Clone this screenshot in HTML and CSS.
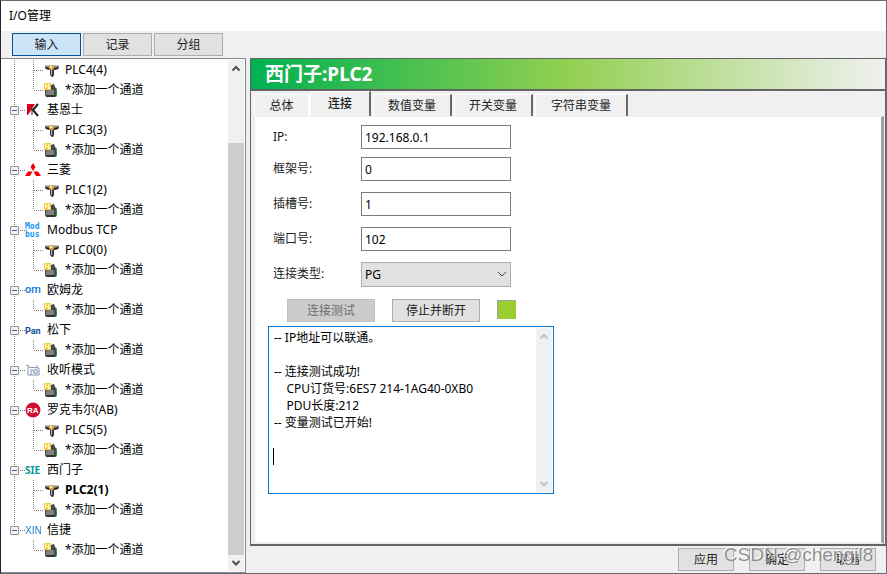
FILE: index.html
```
<!DOCTYPE html>
<html lang="zh-CN">
<head>
  <meta charset="UTF-8" />
  <title>I/O管理</title>
  <link rel="stylesheet" href="styles.css">
</head>
<body>
  <svg class="defs" width="0" height="0" aria-hidden="true">
    <symbol id="plc" viewBox="0 0 16 16">
      <path d="M1 3h14v3l-2 1.500H3L1 6z" fill="#8a8a8a"/>
      <path d="M1 3h14v1H1z" fill="#c4c4c4"/>
      <path d="M1 5l5 1v2L2 7zM10 6l5-1-1 2-4 1z" fill="#222"/>
      <path d="M6 7h4v6l-1 2H8l-2-2z" fill="#3a3a3a"/>
      <path d="M7 8h1v5H7z" fill="#b5b5b5"/>
      <rect x="5" y="3" width="5" height="5" rx="2" fill="#d9a441"/>
      <rect x="6" y="4" width="2" height="2" fill="#fff2b8"/>
    </symbol>
    <symbol id="add" viewBox="0 0 16 16">
      <path d="M7 3l3-1 1 3 2 2v7l-2 1H2l-1-2V8h6z" fill="#4a4a4a"/>
      <path d="M2 9l2-1h6v5H2z" fill="#808080"/>
      <path d="M2 13h9v2H3z" fill="#333"/>
      <path d="M12 7h1v3h-1zM12 11h1v3h-1z" fill="#1fae3a"/>
      <rect x="0" y="1" width="7" height="7" fill="#f3cf45"/>
      <path d="M1 2h1v2h2V2h2v1H5v2h1v2H4V5H2v1H1z" fill="#fff8c9"/>
    </symbol>
    <symbol id="up" viewBox="0 0 16 16"><path d="M4.500 10.500L8 7l3.500 3.500" fill="none" stroke="currentColor" stroke-width="2"/></symbol>
    <symbol id="down" viewBox="0 0 16 16"><path d="M4.500 6L8 9.500 11.500 6" fill="none" stroke="currentColor" stroke-width="2"/></symbol>
  </svg>

  <div class="window">
    <header class="titlebar">I/O管理</header>

    <div class="main">
      <aside class="side">
        <nav class="modes">
          <button class="btn mode selected">输入</button>
          <button class="btn mode">记录</button>
          <button class="btn mode">分组</button>
        </nav>
        <div class="tree-box">
          <ul class="tree">
            <li>
              <ul>
                <li><svg><use href="#plc"/></svg>PLC4(4)</li>
                <li><svg><use href="#add"/></svg>*添加一个通道</li>
              </ul>
            </li>
            <li>
              <div class="node"><button class="fold" aria-label="折叠"></button>
                <svg viewBox="0 0 16 16"><path d="M2 2h8L3 13H2z" fill="#d6001c"/><path d="M13 2L8 8l5 6" fill="none" stroke="#222" stroke-width="2"/><path d="M7 6v7" stroke="#222"/></svg>基恩士</div>
              <ul>
                <li><svg><use href="#plc"/></svg>PLC3(3)</li>
                <li><svg><use href="#add"/></svg>*添加一个通道</li>
              </ul>
            </li>
            <li>
              <div class="node"><button class="fold" aria-label="折叠"></button>
                <svg viewBox="0 0 16 16"><path d="M8 1l2.500 4L8 9 5.500 5zM7.500 9.500L5 14H0l3-4.500zM8.500 9.500H13l3 4.500h-5z" fill="#f00000"/></svg>三菱</div>
              <ul>
                <li><svg><use href="#plc"/></svg>PLC1(2)</li>
                <li><svg><use href="#add"/></svg>*添加一个通道</li>
              </ul>
            </li>
            <li>
              <div class="node"><button class="fold" aria-label="折叠"></button>
                <svg viewBox="0 0 16 16"><g class="logo-mod"><text x="0" y="7">Mod</text><text x="0" y="15">bus</text></g></svg>Modbus TCP</div>
              <ul>
                <li><svg><use href="#plc"/></svg>PLC0(0)</li>
                <li><svg><use href="#add"/></svg>*添加一个通道</li>
              </ul>
            </li>
            <li>
              <div class="node"><button class="fold" aria-label="折叠"></button>
                <svg viewBox="0 0 16 16"><text class="logo-om" x="0" y="11">om</text></svg>欧姆龙</div>
              <ul>
                <li><svg><use href="#add"/></svg>*添加一个通道</li>
              </ul>
            </li>
            <li>
              <div class="node"><button class="fold" aria-label="折叠"></button>
                <svg viewBox="0 0 16 16"><text class="logo-pan" x="0" y="12">Pan</text></svg>松下</div>
              <ul>
                <li><svg><use href="#add"/></svg>*添加一个通道</li>
              </ul>
            </li>
            <li>
              <div class="node"><button class="fold" aria-label="折叠"></button>
                <svg viewBox="0 0 16 16" fill="none" stroke="#8291b5"><path d="M1 3l3 1M3 5l11 1v7H3zM12 6V3M5 8h3M5 10h2M5 12h2"/><circle cx="10.500" cy="9.500" r="2" fill="#dce4f5"/></svg>收听模式</div>
              <ul>
                <li><svg><use href="#add"/></svg>*添加一个通道</li>
              </ul>
            </li>
            <li>
              <div class="node"><button class="fold" aria-label="折叠"></button>
                <svg viewBox="0 0 16 16"><circle cx="8" cy="8" r="7.500" fill="#cf1035"/><text class="logo-ra" x="2" y="11">RA</text></svg>罗克韦尔(AB)</div>
              <ul>
                <li><svg><use href="#plc"/></svg>PLC5(5)</li>
                <li><svg><use href="#add"/></svg>*添加一个通道</li>
              </ul>
            </li>
            <li>
              <div class="node"><button class="fold" aria-label="折叠"></button>
                <svg viewBox="0 0 16 16"><text class="logo-sie" x="0" y="12">SIE</text></svg>西门子</div>
              <ul>
                <li class="current"><svg><use href="#plc"/></svg>PLC2(1)</li>
                <li><svg><use href="#add"/></svg>*添加一个通道</li>
              </ul>
            </li>
            <li>
              <div class="node"><button class="fold" aria-label="折叠"></button>
                <svg viewBox="0 0 16 16"><text class="logo-xin" x="0" y="12">XIN</text></svg>信捷</div>
              <ul>
                <li><svg><use href="#add"/></svg>*添加一个通道</li>
              </ul>
            </li>
          </ul>
          <div class="scrollbar">
            <svg><use href="#up"/></svg>
            <div class="track"><div class="thumb"></div></div>
            <svg><use href="#down"/></svg>
          </div>
        </div>
      </aside>

      <section class="detail">
        <div class="panel">
          <h1>西门子:PLC2</h1>
          <div class="tabs" role="tablist">
            <button class="tab" role="tab">总体</button>
            <button class="tab active" role="tab" aria-selected="true">连接</button>
            <button class="tab" role="tab">数值变量</button>
            <button class="tab" role="tab">开关变量</button>
            <button class="tab wide" role="tab">字符串变量</button>
          </div>
          <form class="page">
            <div class="field"><label for="ip">IP:</label><input id="ip" type="text" value="192.168.0.1"></div>
            <div class="field"><label for="rack">框架号:</label><input id="rack" type="text" value="0"></div>
            <div class="field"><label for="slot">插槽号:</label><input id="slot" type="text" value="1"></div>
            <div class="field"><label for="port">端口号:</label><input id="port" type="text" value="102"></div>
            <div class="field">
              <label for="kind">连接类型:</label>
              <div class="select">
                <select id="kind"><option>PG</option></select>
                <svg viewBox="0 0 16 16"><path d="M4 6l4 4 4-4" fill="none" stroke="#444"/></svg>
              </div>
            </div>
            <div class="actions">
              <button type="button" class="btn" disabled>连接测试</button>
              <button type="button" class="btn">停止并断开</button>
              <span class="lamp"></span>
            </div>
            <div class="log">
              <textarea aria-label="日志" spellcheck="false">-- IP地址可以联通。

-- 连接测试成功!
    CPU订货号:6ES7 214-1AG40-0XB0
    PDU长度:212
-- 变量测试已开始!
</textarea>
              <div class="scrollbar idle">
                <svg><use href="#up"/></svg>
                <svg><use href="#down"/></svg>
              </div>
              <span class="caret"></span>
            </div>
          </form>
        </div>
        <footer class="footer">
          <button class="btn">应用</button>
          <button class="btn">确定</button>
          <button class="btn">取消</button>
          <span class="watermark">CSDN @chengjl8</span>
        </footer>
      </section>
    </div>
  </div>
</body>
</html>
```

FILE: styles.css
```
* {
  box-sizing: border-box;
}
body {
  margin: 0;
  overflow: hidden;
  background-color: #f0f0f0;
  font: 12px/20px 'Noto Sans', 'Noto Sans CJK SC', sans-serif;
  color: #000;
}
button, input, select, textarea {
  font: inherit;
  color: inherit;
  margin: 0;
  border-radius: 0;
}
ul {
  list-style: none;
  margin: 0;
  padding: 0;
}
.defs {
  position: absolute;
}
.window {
  height: 100vh;
  display: flex;
  flex-direction: column;
  border: 1px solid #6b6b6b;
  border-left-color: #25232b;
}
.titlebar {
  height: 30px;
  flex: none;
  padding: 0 8px;
  line-height: 30px;
  background: #fff;
}
.main {
  flex: 1;
  min-height: 0;
  display: flex;
  gap: 4px;
}
.btn {
  height: 23px;
  padding: 0;
  line-height: 20px;
  background: #e1e1e1;
  border: 1px solid #adadad;
  color: #222;
}
.btn:disabled {
  background: #ccc;
  border-color: #bfbfbf;
  color: #6d6d6d;
}

/* left side */
.side {
  width: 245px;
  flex: none;
  display: flex;
  flex-direction: column;
}
.modes {
  display: flex;
  gap: 2px;
  padding: 2px 11px;
}
.mode {
  width: 69px;
}
.mode.selected {
  background: #cce4f7;
  border-color: #00549b;
}
.tree-box {
  flex: 1;
  min-height: 0;
  display: flex;
  background: #fff;
  border: 1px solid #828790;
  border-left: none;
  padding: 1px;
}
.tree {
  flex: 1;
  overflow: hidden;
}
.tree > li {
  background: repeating-linear-gradient(#808080 0 1px, transparent 1px 2px) 12px 0 / 1px 100% no-repeat;
}
.tree > li:last-child {
  background-size: 1px 10px;
}
.node, .tree li li {
  height: 20px;
  display: flex;
  align-items: center;
  white-space: nowrap;
}
.node {
  gap: 6px;
  padding-left: 8px;
  background: repeating-linear-gradient(90deg, #808080 0 1px, transparent 1px 2px) 18px 10px / 5px 1px no-repeat;
}
.tree li li {
  gap: 5px;
  padding-left: 42px;
  background:
    repeating-linear-gradient(#808080 0 1px, transparent 1px 2px) 31px 0 / 1px 20px no-repeat,
    repeating-linear-gradient(90deg, #808080 0 1px, transparent 1px 2px) 32px 10px / 10px 1px no-repeat;
}
.tree li li:last-child {
  background-size: 1px 10px, 10px 1px;
}
.tree svg {
  width: 16px;
  height: 16px;
  flex: none;
}
.current {
  font-weight: bold;
}
.fold {
  width: 9px;
  height: 9px;
  padding: 0;
  border: 1px solid #919191;
  border-radius: 1px;
  background: linear-gradient(#3c5aa8, #3c5aa8) center / 5px 1px no-repeat #f4f4f4;
}

.logo-mod {
  font: bold 8px 'DejaVu Sans Mono', monospace;
  fill: #2196f3;
}
.logo-om {
  font: 500 11px 'Roboto', sans-serif;
  fill: #0b7bd6;
}
.logo-pan {
  font: bold 9px 'Roboto', sans-serif;
  fill: #0b4a94;
}
.logo-ra {
  font: bold 8px 'Liberation Sans', sans-serif;
  fill: #fff;
}
.logo-sie {
  font: bold 10px 'Noto Sans', sans-serif;
  fill: #009999;
}
.logo-xin {
  font: 10px 'Liberation Sans', sans-serif;
  fill: #1683c4;
}

.scrollbar {
  width: 16px;
  flex: none;
  display: flex;
  flex-direction: column;
  justify-content: space-between;
  background: #f0f0f0;
  color: #505050;
}
.scrollbar svg {
  width: 16px;
  height: 16px;
}
.scrollbar.idle {
  color: #bfbfbf;
}
.track {
  flex: 1;
  display: flex;
  flex-direction: column;
  justify-content: flex-end;
}
.thumb {
  height: 86%;
  background: #cdcdcd;
}

/* right side */
.detail {
  flex: 1;
  display: flex;
  flex-direction: column;
  padding-top: 27px;
}
.panel {
  flex: 1;
  display: flex;
  flex-direction: column;
  border: 1px solid #646464;
  border-width: 1px 1px 2px 1px;
}
.panel h1 {
  margin: 0;
  padding: 0 14px;
  font-size: 19px;
  line-height: 30px;
  color: #fff;
  background: linear-gradient(90deg, #00b050, #92d050 50%, #f0f0f0);
  border-bottom: 2px solid #646464;
}
.tabs {
  display: flex;
  align-items: flex-end;
  gap: 2px;
  height: 25px;
  padding-left: 3px;
}
.tab {
  height: 22px;
  width: 79px;
  padding: 0;
  color: #222;
  background: #f0f0f0;
  border: 1px solid #fff;
  border-width: 1px 2px 0 1px;
  border-right-color: #696969;
}
.tab.wide {
  width: 93px;
}
.tab:first-child {
  width: 56px;
  border-right-color: #fff;
}
.tab.active {
  width: 61px;
  height: 25px;
  margin-left: -2px;
  padding-bottom: 1px;
  font-weight: 500;
}
.page {
  flex: 1;
  padding: 8px 13px;
  margin: 0 1px 0 2px;
  background: #fff;
  border: 2px solid #ececec;
  border-right: 3px solid #a0a0a0;
  border-top-width: 1px;
}
.field {
  display: flex;
  align-items: center;
  margin: 0 0 11px 5px;
}
.field:first-child {
  margin-bottom: 8px;
}
.field label {
  width: 88px;
  color: #222;
}
.field input, .select {
  width: 150px;
  height: 24px;
}
.field input {
  padding: 0 3px;
  border: 1px solid #7a7a7a;
  background: #fff;
}
.select {
  position: relative;
}
.select select {
  width: 100%;
  height: 25px;
  padding: 0 3px;
  appearance: none;
  background: #e1e1e1;
  border: 1px solid #adadad;
}
.select svg {
  position: absolute;
  right: 1px;
  top: 4px;
  width: 16px;
  height: 16px;
  pointer-events: none;
}
.actions {
  display: flex;
  gap: 17px;
  padding: 2px 0 4px 19px;
}
.actions .btn {
  width: 88px;
}
.lamp {
  width: 19px;
  height: 19px;
  margin-top: 1px;
  background: #9acd32;
  border: 1px solid #a0a0a0;
  border-width: 1px 0 0 1px;
}
.log {
  position: relative;
  display: flex;
  width: 286px;
  height: 168px;
  padding: 1px;
  border: 1px solid #0078d7;
}
.log textarea {
  flex: 1;
  padding: 1px 4px;
  border: none;
  outline: none;
  resize: none;
  overflow: hidden;
  line-height: 17px;
}
.caret {
  position: absolute;
  left: 4px;
  top: 121px;
  width: 1px;
  height: 17px;
  background: #000;
}
.footer {
  position: relative;
  display: flex;
  justify-content: flex-end;
  gap: 15px;
  padding: 2px 10px;
}
.footer .btn {
  width: 56px;
}
.watermark {
  position: absolute;
  right: 13px;
  top: -2px;
  font: 19px/22px 'Liberation Sans', sans-serif;
  color: rgba(120, 120, 120, 0.8);
  text-shadow: -1px -1px 0 #fff;
}
```
